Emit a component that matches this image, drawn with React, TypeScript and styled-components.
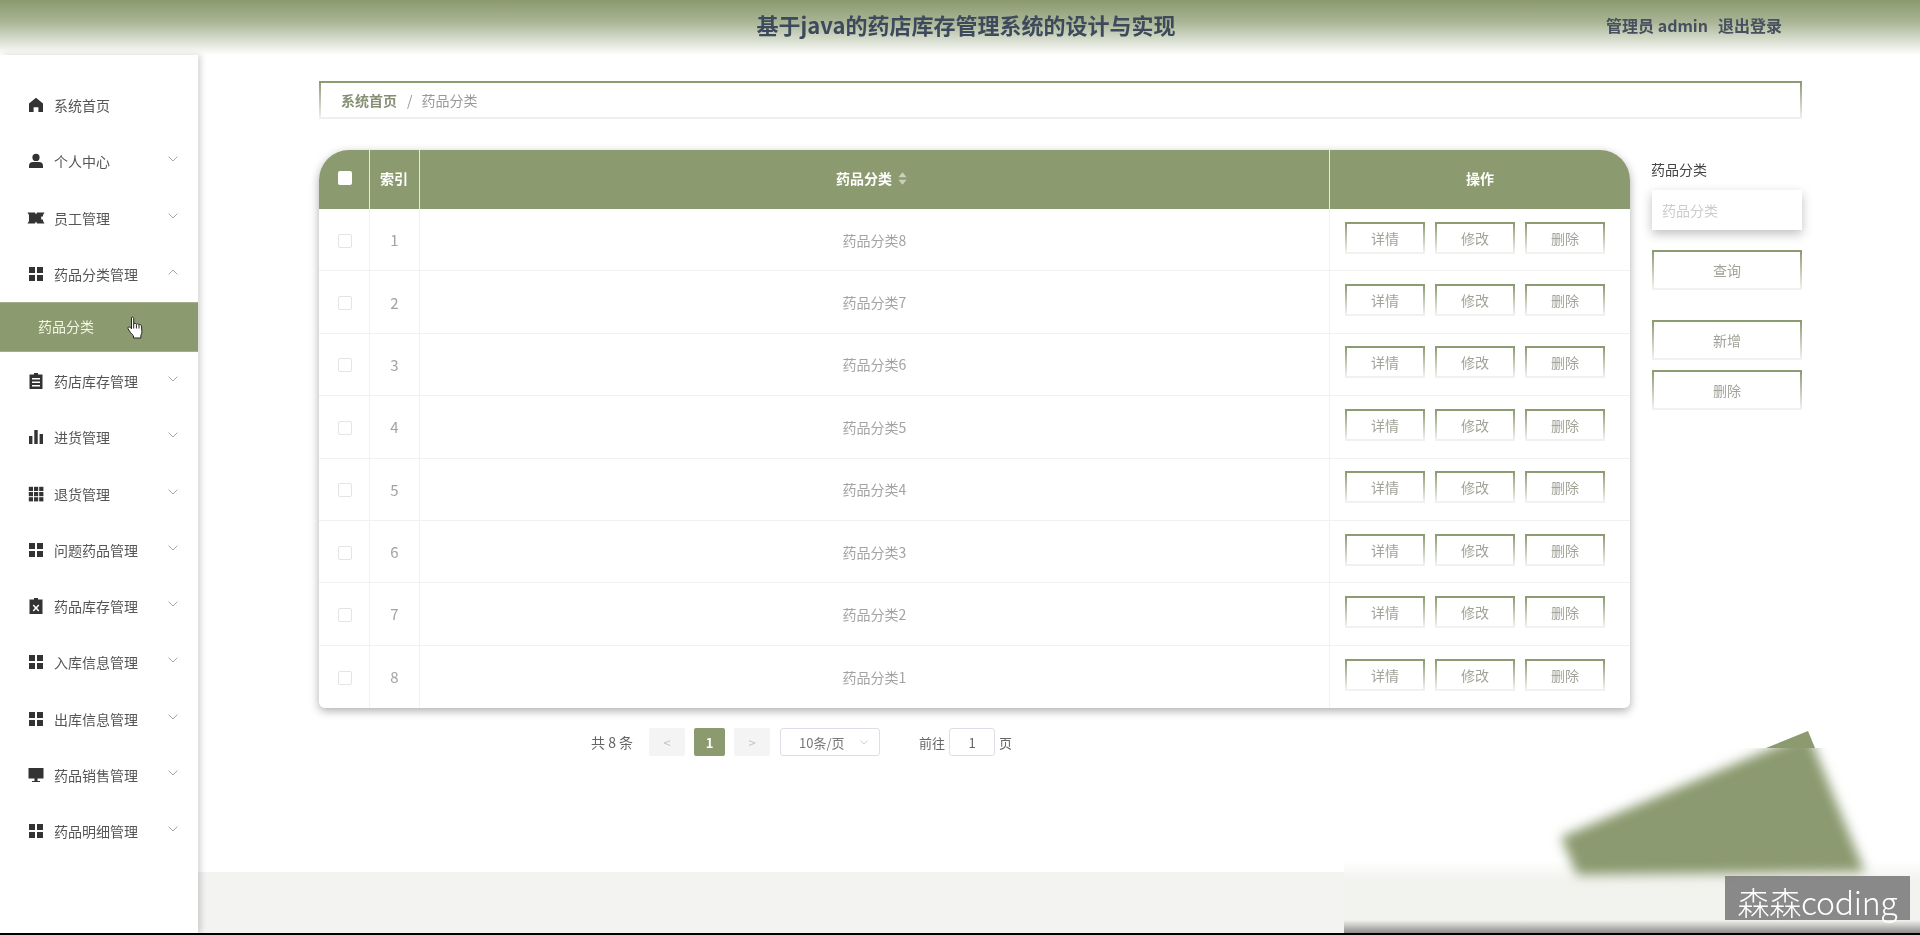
import React from 'react'
import styled, { createGlobalStyle } from 'styled-components'

const GREEN = '#8b9a6f'
const SANS = '"Noto Sans CJK SC", "Liberation Sans", sans-serif'

const GlobalStyle = createGlobalStyle`
  html, body {
    margin: 0;
    padding: 0;
    background: #fff;
    font-family: ${SANS};
  }
  * {
    box-sizing: border-box;
  }
`

type IconName = 'home' | 'user' | 'ticket' | 'menu' | 'order' | 'data' | 'grid' | 'release' | 'platform'

const iconPaths: Record<IconName, React.ReactNode> = {
  home: <path d="M8 .8 15 6.600V15h-4.600v-4.800H5.600V15H1V6.600Z" />,
  user: (
    <>
      <circle cx="8" cy="4.400" r="3.600" />
      <path d="M1 15v-2a4 4 0 0 1 4-4h6a4 4 0 0 1 4 4v2Z" />
    </>
  ),
  ticket: <path d="M-.5 2.500H7L8 4.500 9 2.500h7.500L15 5v1.500h-1.800v3H15V11l1.500 2.500H9L8 11.500 7 13.500H-.5L1 11V5Z" />,
  menu: (
    <>
      <rect x="1" y="1" width="6" height="6" />
      <rect x="9" y="1" width="6" height="6" />
      <rect x="1" y="9" width="6" height="6" />
      <rect x="9" y="9" width="6" height="6" />
    </>
  ),
  order: (
    <path
      fillRule="evenodd"
      d="M6 0h4v1.500h4.500V16h-13V1.500H6ZM4 5v1.500h8V5Zm0 3.500V10h8V8.500Zm0 3.500v1.500h8V12Z"
    />
  ),
  data: (
    <>
      <rect x="1" y="7" width="3.400" height="8" />
      <rect x="6.300" y="1" width="3.400" height="14" />
      <rect x="11.600" y="5" width="3.400" height="10" />
    </>
  ),
  grid: (
    <>
      {[0.800, 6, 11.200].flatMap((x) =>
        [0.800, 6, 11.200].map((y) => <rect key={`${x}-${y}`} x={x} y={y} width="4.200" height="4.200" />),
      )}
    </>
  ),
  release: (
    <path
      fillRule="evenodd"
      d="M6 0h4v1.500h4.500V16h-13V1.500H6ZM5.800 6.500 4.700 7.600 6.900 10l-2.200 2.400 1.100 1.100L8 11.100l2.200 2.400 1.100-1.100L9.100 10l2.200-2.400-1.100-1.100L8 8.900Z"
    />
  ),
  platform: <path d="M.5 1h15v10.500h-6V14h2.500v1H4v-1h2.500v-2.500h-6Z" />,
}

const Icon = ({ name }: { name: IconName }) => (
  <IconSvg viewBox="0 0 16 16" aria-hidden="true">
    {iconPaths[name]}
  </IconSvg>
)

const Chevron = ({ up }: { up?: boolean }) => (
  <ChevronSvg viewBox="0 0 10 6" aria-hidden="true">
    <path d={up ? 'M.6 5.400 5 1l4.400 4.400' : 'M.6.6 5 5 9.400.6'} />
  </ChevronSvg>
)

const menuItems: { label: string; icon: IconName; arrow?: 'up' | 'down' }[] = [
  { label: '系统首页', icon: 'home' },
  { label: '个人中心', icon: 'user', arrow: 'down' },
  { label: '员工管理', icon: 'ticket', arrow: 'down' },
  { label: '药品分类管理', icon: 'menu', arrow: 'up' },
  { label: '药店库存管理', icon: 'order', arrow: 'down' },
  { label: '进货管理', icon: 'data', arrow: 'down' },
  { label: '退货管理', icon: 'grid', arrow: 'down' },
  { label: '问题药品管理', icon: 'menu', arrow: 'down' },
  { label: '药品库存管理', icon: 'release', arrow: 'down' },
  { label: '入库信息管理', icon: 'menu', arrow: 'down' },
  { label: '出库信息管理', icon: 'menu', arrow: 'down' },
  { label: '药品销售管理', icon: 'platform', arrow: 'down' },
  { label: '药品明细管理', icon: 'menu', arrow: 'down' },
]

const rows = [8, 7, 6, 5, 4, 3, 2, 1]

const App = () => (
  <>
    <GlobalStyle />
    <Page>
      <Header>
        <span />
        <Title>基于java的药店库存管理系统的设计与实现</Title>
        <UserArea>
          <span>管理员 admin</span>
          <span>退出登录</span>
        </UserArea>
      </Header>
      <Body>
        <Sidebar>
          {menuItems.map((item) => (
            <React.Fragment key={item.label}>
              <MenuItem>
                <Icon name={item.icon} />
                <MenuLabel>{item.label}</MenuLabel>
                {item.arrow && <Chevron up={item.arrow === 'up'} />}
              </MenuItem>
              {item.arrow === 'up' && (
                <SubItem>
                  药品分类
                  <HandCursor viewBox="0 0 18 23" aria-hidden="true">
                    <path d="M4.500 1.500c1-.9 2.200-.3 2.200 1V8c.6-.9 2.300-.9 2.700.3.700-.8 2.300-.6 2.600.6.800-.6 2.400-.2 2.500 1.200l.4 5.500c.1 1.500-.4 2.700-1 3.700V22H6.500v-2.200C4.800 18.500 1.500 14 1 12.500c-.3-1.300 1-2.100 2-1.300l1.500 1.600Z" />
                    <path d="M6.700 8v4.500M9.400 8.400v4.100M12 9v3.500" />
                  </HandCursor>
                </SubItem>
              )}
            </React.Fragment>
          ))}
        </Sidebar>
        <Main>
          <Content>
            <Breadcrumb>
              <CrumbHome>系统首页</CrumbHome>
              <CrumbSep>/</CrumbSep>
              <CrumbCurrent>药品分类</CrumbCurrent>
            </Breadcrumb>
            <Workspace>
              <TableColumn>
                <TableCard>
                  <HeadRow>
                    <HeadCell>
                      <HeadCheck />
                    </HeadCell>
                    <HeadCell>索引</HeadCell>
                    <HeadCell>
                      药品分类
                      <SortIcon viewBox="0 0 10 14" aria-hidden="true">
                        <path d="M5 0 9.500 5.500H.5Z" />
                        <path d="M5 14 .5 8.500h9Z" />
                      </SortIcon>
                    </HeadCell>
                    <HeadCell $last>操作</HeadCell>
                  </HeadRow>
                  {rows.map((n, i) => (
                    <BodyRow key={n}>
                      <BodyCell>
                        <RowCheck />
                      </BodyCell>
                      <IndexCell>{i + 1}</IndexCell>
                      <BodyCell>药品分类{n}</BodyCell>
                      <ActionCell>
                        <FadeButton $small>详情</FadeButton>
                        <FadeButton $small>修改</FadeButton>
                        <FadeButton $small>删除</FadeButton>
                      </ActionCell>
                    </BodyRow>
                  ))}
                </TableCard>
                <Pagination>
                  <Total>共 8 条</Total>
                  <PageStep>&lt;</PageStep>
                  <PageCurrent>1</PageCurrent>
                  <PageStep>&gt;</PageStep>
                  <SizeSelect>
                    10条/页
                    <SizeArrow viewBox="0 0 10 6" aria-hidden="true">
                      <path d="M.6.6 5 5 9.400.6" />
                    </SizeArrow>
                  </SizeSelect>
                  <Jump>
                    前往<JumpInput>1</JumpInput>页
                  </Jump>
                </Pagination>
              </TableColumn>
              <SidePanel>
                <SideLabel>药品分类</SideLabel>
                <SearchInput>药品分类</SearchInput>
                <QueryButton>查询</QueryButton>
                <AddButton>新增</AddButton>
                <RemoveButton>删除</RemoveButton>
              </SidePanel>
            </Workspace>
          </Content>
          <Footer />
        </Main>
      </Body>
      <BlurPatch viewBox="1344 728 576 207" aria-hidden="true">
        <defs>
          <filter id="smear" x="-20%" y="-20%" width="140%" height="140%">
            <feGaussianBlur stdDeviation="6" />
          </filter>
          <linearGradient id="fade" x1="0" y1="0" x2="0" y2="1">
            <stop offset="0.6" stopColor="#fff" />
            <stop offset="0.71" stopColor="#f2f3ef" />
            <stop offset="0.92" stopColor="#f2f3ef" />
            <stop offset="1" stopColor="#7d7d7d" />
          </linearGradient>
          <clipPath id="patch">
            <rect x="1344" y="748" width="576" height="187" />
          </clipPath>
        </defs>
        <polygon points="1766,748 1808,731 1815,748" fill={GREEN} />
        <rect x="1344" y="748" width="576" height="187" fill="url(#fade)" />
        <g clipPath="url(#patch)">
          <polygon points="1808,733 1561,837 1577,875 1865,872" fill={GREEN} filter="url(#smear)" />
        </g>
      </BlurPatch>
      <Watermark>森森coding</Watermark>
    </Page>
  </>
)

const Page = styled.div`
  position: relative;
  display: flex;
  flex-direction: column;
  width: 1920px;
  height: 935px;
  overflow: hidden;
  background: #fff;
  border-bottom: 2px solid #000;
  filter: blur(0.3px);
`

const Header = styled.header`
  flex: none;
  display: grid;
  grid-template-columns: 1fr auto 1fr;
  align-items: center;
  height: 55px;
  padding-bottom: 6px;
  background: linear-gradient(to bottom, ${GREEN} 0%, #a9b595 40%, #fff 100%);
`

const Title = styled.h1`
  margin: 0 0 0 12px;
  font-size: 22px;
  font-weight: 700;
  line-height: 49px;
  color: #3d4a5c;
`

const UserArea = styled.div`
  display: flex;
  justify-content: flex-end;
  gap: 10px;
  padding-right: 138px;
  font-size: 16px;
  font-weight: 600;
  color: #46505e;
`

const Body = styled.div`
  flex: 1;
  display: flex;
  min-height: 0;
`

const Sidebar = styled.nav`
  flex: none;
  position: relative;
  width: 198px;
  padding-top: 22px;
  background: #fff;
  box-shadow: 3px 0 6px rgba(0, 0, 0, 0.16);
`

const MenuItem = styled.div`
  display: flex;
  align-items: center;
  gap: 10px;
  height: 56.25px;
  padding: 0 20px 0 28px;
`

const IconSvg = styled.svg`
  flex: none;
  width: 16px;
  height: 16px;
  fill: #333;
  overflow: visible;
`

const MenuLabel = styled.span`
  flex: 1;
  font-size: 14px;
  color: #555;
`

const ChevronSvg = styled.svg`
  flex: none;
  width: 10px;
  height: 6px;
  margin-top: -4px;
  fill: none;
  stroke: #a6a6a6;
  stroke-width: 1;
`

const SubItem = styled.div`
  position: relative;
  display: flex;
  align-items: center;
  height: 50px;
  margin-bottom: 1px;
  padding: 0 0 3px 38px;
  font-size: 14px;
  color: #f2f6e6;
  background: ${GREEN};
  border-top: 1px solid #a3af8c;
  border-bottom: 1px solid #a3af8c;
`

const HandCursor = styled.svg`
  position: absolute;
  left: 127px;
  top: 13px;
  width: 18px;
  height: 23px;
  fill: #fff;
  stroke: #222;
  stroke-width: 1;
`

const Main = styled.main`
  flex: 1;
  display: flex;
  flex-direction: column;
  min-width: 0;
`

const Content = styled.div`
  flex: 1;
  padding: 26px 118px 0 121px;
`

const Breadcrumb = styled.div`
  display: flex;
  align-items: center;
  height: 38px;
  margin-bottom: 31px;
  padding-left: 20px;
  font-size: 14px;
  border: 2px solid;
  border-image: linear-gradient(to bottom, ${GREEN}, #f0f0f0) 1;
`

const CrumbHome = styled.span`
  font-weight: 600;
  color: #858f73;
`

const CrumbSep = styled.span`
  margin: 0 9px 0 10px;
  color: #999;
`

const CrumbCurrent = styled.span`
  color: #999;
`

const Workspace = styled.div`
  display: flex;
  gap: 22px;
`

const TableColumn = styled.div`
  width: 1311px;
`

const TableCard = styled.div`
  overflow: hidden;
  border-radius: 30px 30px 6px 6px;
  background: #fff;
  box-shadow: 0 3px 10px rgba(0, 0, 0, 0.32);
`

const HeadRow = styled.div`
  display: grid;
  grid-template-columns: 51px 50px 910px 300px;
  height: 59px;
  background: ${GREEN};
`

const HeadCell = styled.div<{ $last?: boolean }>`
  display: flex;
  align-items: center;
  justify-content: center;
  gap: 6px;
  padding-bottom: 3px;
  padding-right: ${(p) => (p.$last ? '0' : '1px')};
  font-size: 14px;
  font-weight: 700;
  color: #fff;
  border-right: ${(p) => (p.$last ? 'none' : '1px solid #e6eadc')};

  &:nth-child(3) {
    padding-right: 6px;
  }
`

const HeadCheck = styled.span`
  display: block;
  width: 14px;
  height: 14px;
  margin-left: 2px;
  background: #fff;
  border-radius: 2px;
`

const SortIcon = styled.svg`
  width: 9px;
  height: 13px;
  fill: #c9d0bb;
`

const BodyRow = styled.div`
  display: grid;
  grid-template-columns: 51px 50px 910px 300px;
  height: 62.375px;
  border-bottom: 1px solid #f0f1f4;

  &:last-child {
    border-bottom: none;
  }
`

const BodyCell = styled.div`
  display: flex;
  align-items: center;
  justify-content: center;
  font-size: 14px;
  color: #a3a3a3;
  border-right: 1px solid #f0f1f4;
`

const IndexCell = styled(BodyCell)`
  font-size: 15px;
`

const RowCheck = styled.span`
  display: block;
  width: 14px;
  height: 14px;
  margin: 2px 0 0 2px;
  border: 1px solid #e2e4e8;
  border-radius: 2px;
`

const ActionCell = styled.div`
  display: flex;
  align-items: center;
  gap: 10px;
  padding-left: 15px;
  padding-bottom: 4px;
`

const FadeButton = styled.div<{ $small?: boolean }>`
  display: flex;
  align-items: center;
  justify-content: center;
  width: ${(p) => (p.$small ? '80px' : '100%')};
  height: ${(p) => (p.$small ? '32px' : '40px')};
  font-size: 14px;
  color: #a0a499;
  background: #fff;
  border: 2px solid;
  border-image: linear-gradient(to bottom, ${GREEN}, #f2f2f2) 1;
`

const Pagination = styled.div`
  display: flex;
  align-items: center;
  height: 28px;
  margin-top: 20px;
  padding-left: 272px;
  font-size: 13px;
  color: #666;
`

const Total = styled.span`
  width: 58px;
  font-size: 14px;
`

const PageStep = styled.span`
  display: flex;
  align-items: center;
  justify-content: center;
  width: 36px;
  height: 28px;
  font-size: 13px;
  color: #c0c4cc;
  background: #f4f4f5;
  border-radius: 2px;
`

const PageCurrent = styled(PageStep)`
  width: 31px;
  margin: 0 9px;
  font-weight: 700;
  color: #fff;
  background: ${GREEN};
`

const SizeSelect = styled.div`
  position: relative;
  display: flex;
  align-items: center;
  width: 100px;
  height: 28px;
  margin-left: 10px;
  padding-left: 18px;
  font-size: 13px;
  color: #777;
  border: 1px solid #dcdfe6;
  border-radius: 3px;
`

const SizeArrow = styled.svg`
  position: absolute;
  right: 11px;
  top: 11px;
  width: 8px;
  height: 5px;
  fill: none;
  stroke: #c0c4cc;
  stroke-width: 1;
`

const Jump = styled.div`
  display: flex;
  align-items: center;
  gap: 4px;
  margin-left: 39px;
  color: #666;
`

const JumpInput = styled.span`
  display: flex;
  align-items: center;
  justify-content: center;
  width: 46px;
  height: 28px;
  color: #666;
  border: 1px solid #dcdfe6;
  border-radius: 3px;
`

const SidePanel = styled.aside`
  flex: none;
  width: 150px;
`

const SideLabel = styled.div`
  display: flex;
  align-items: center;
  height: 40px;
  margin-left: -1px;
  padding-bottom: 2px;
  font-size: 14px;
  color: #444;
`

const SearchInput = styled.div`
  display: flex;
  align-items: center;
  height: 40px;
  padding-left: 10px;
  font-size: 14px;
  color: #ccc;
  background: #fff;
  box-shadow: 0 4px 10px rgba(0, 0, 0, 0.25);
`

const QueryButton = styled(FadeButton)`
  margin-top: 20px;
`

const AddButton = styled(FadeButton)`
  margin-top: 30px;
`

const RemoveButton = styled(FadeButton)`
  margin-top: 10px;
`

const Footer = styled.footer`
  flex: none;
  height: 61px;
  background: #f3f4f1;
`

const BlurPatch = styled.svg`
  position: absolute;
  left: 1344px;
  top: 728px;
  width: 576px;
  height: 207px;
`

const Watermark = styled.div`
  position: absolute;
  left: 1725px;
  top: 876px;
  display: flex;
  align-items: center;
  justify-content: center;
  width: 185px;
  height: 44px;
  padding-top: 6px;
  font-size: 32px;
  line-height: 38px;
  font-weight: 300;
  letter-spacing: -0.3px;
  color: #fff;
  background: rgba(125, 125, 125, 0.9);
`

export default App
